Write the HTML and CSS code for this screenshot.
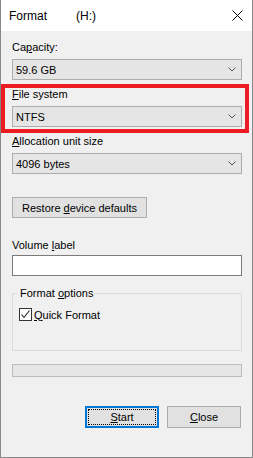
FILE: index.html
```html
<!DOCTYPE html>
<html lang="en">
<head>
  <meta charset="UTF-8">
  <meta name="viewport" content="width=device-width, initial-scale=1.0">
  <title>Format (H:)</title>
  <link rel="stylesheet" href="styles.css">
</head>
<body>
  <div class="window">
    <div class="titlebar">
      <span class="title">Format</span>
      <span class="drive">(H:)</span>
      <svg class="close-x" width="11" height="11" viewBox="0 0 11 11">
        <path d="M0.5 0.5 L10.5 10.5 M10.5 0.5 L0.5 10.5" stroke="#000" stroke-width="1" fill="none"/>
      </svg>
    </div>

    <div class="content">
      <div class="field">
        <label>Ca<u>p</u>acity:</label>
        <div class="combo">
          <span>59.6 GB</span>
          <svg class="chevron" width="8" height="5" viewBox="0 0 8 5"><polyline points="0.5,0.5 4,4 7.5,0.5" stroke="#555" fill="none"/></svg>
        </div>
      </div>

      <div class="field highlighted">
        <label><u>F</u>ile system</label>
        <div class="combo">
          <span>NTFS</span>
          <svg class="chevron" width="8" height="5" viewBox="0 0 8 5"><polyline points="0.5,0.5 4,4 7.5,0.5" stroke="#555" fill="none"/></svg>
        </div>
        <div class="red-box"></div>
      </div>

      <div class="field">
        <label><u>A</u>llocation unit size</label>
        <div class="combo">
          <span>4096 bytes</span>
          <svg class="chevron" width="8" height="5" viewBox="0 0 8 5"><polyline points="0.5,0.5 4,4 7.5,0.5" stroke="#555" fill="none"/></svg>
        </div>
      </div>

      <button class="btn restore">Restore <u>d</u>evice defaults</button>

      <label class="volume-label">Volume <u>l</u>abel</label>
      <input class="volume-input" type="text">

      <fieldset class="options">
        <legend>Format <u>o</u>ptions</legend>
        <div class="check-row">
          <span class="checkbox">
            <svg width="11" height="11" viewBox="0 0 11 11"><polyline points="1.5,5.5 4,8.5 9.5,1.5" stroke="#222" stroke-width="1.1" fill="none"/></svg>
          </span>
          <span><u>Q</u>uick Format</span>
        </div>
      </fieldset>

      <div class="progress"></div>

      <div class="actions">
        <button class="btn start"><u>S</u>tart</button>
        <button class="btn"><u>C</u>lose</button>
      </div>
    </div>
  </div>
</body>
</html>
```

FILE: styles.css
```css
/* Format dialog */
body {
  margin: 0;
  padding: 0;
  font-family: 'Liberation Sans', Arial, sans-serif;
  font-size: 11px;
  color: #000;
  background: #f0f0f0;
}

.window {
  width: 253px;
  height: 458px;
  box-sizing: border-box;
  border: 1px solid #888;
  border-top: none;
  display: flex;
  flex-direction: column;
  background: #f0f0f0;
}

.titlebar {
  height: 31px;
  flex-shrink: 0;
  background: #fff;
  display: flex;
  align-items: center;
  padding-left: 8px;
  font-size: 12px;
}

.title {
  width: 67px;
}

.close-x {
  margin-left: auto;
  margin-right: 9px;
}

.content {
  flex: 1;
  padding: 9px 10px 0 11px;
  display: flex;
  flex-direction: column;
}

label {
  display: block;
  line-height: 15px;
}

.field {
  margin-bottom: 7px;
}

.field label {
  margin-bottom: 4px;
}

.highlighted {
  position: relative;
}

.red-box {
  position: absolute;
  top: -3px;
  left: -11px;
  right: -7px;
  bottom: -6px;
  border: 4px solid #ed1c24;
}

.combo {
  height: 21px;
  box-sizing: border-box;
  border: 1px solid #adadad;
  background: #e5e5e5;
  display: flex;
  align-items: center;
  padding: 0 5px 0 3px;
}

.chevron {
  margin-left: auto;
}

.btn {
  font-family: inherit;
  font-size: 11px;
  color: #000;
  height: 21px;
  box-sizing: border-box;
  border: 1px solid #adadad;
  background: #e1e1e1;
  padding: 0;
  border-radius: 0;
}

.restore {
  margin-top: 16px;
  width: 135px;
  align-self: flex-start;
}

.volume-label {
  margin-top: 20px;
  margin-bottom: 2px;
}

.volume-input {
  height: 21px;
  box-sizing: border-box;
  border: 1px solid #7a7a7a;
  background: #fff;
  margin: 0;
  padding: 0 3px;
}

.options {
  margin: 10px 0 0;
  padding: 7px 6px 29px;
  border: 1px solid #dcdcdc;
}

.options legend {
  padding: 0 2px;
  margin-left: -1px;
  line-height: 15px;
}

.check-row {
  display: flex;
  align-items: center;
  gap: 2px;
  height: 13px;
}

.checkbox {
  width: 13px;
  height: 13px;
  box-sizing: border-box;
  border: 1px solid #333;
  background: #fff;
  display: flex;
  align-items: center;
  justify-content: center;
}

.progress {
  margin-top: 13px;
  height: 13px;
  box-sizing: border-box;
  border: 1px solid #bcbcbc;
  background: #e6e6e6;
}

.actions {
  margin-top: 29px;
  display: flex;
  justify-content: flex-end;
  gap: 8px;
  padding-right: 1px;
}

.actions .btn {
  width: 74px;
  height: 22px;
}

.start {
  border: 2px solid #0078d7;
  outline: 1px dotted #000;
  outline-offset: -4px;
}
```
